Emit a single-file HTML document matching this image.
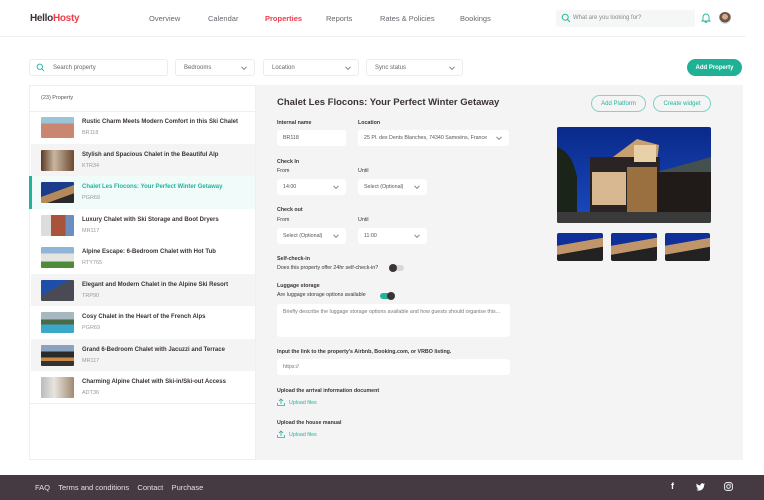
<!DOCTYPE html>
<html><head><meta charset="utf-8"><style>
*{margin:0;padding:0;box-sizing:border-box}
body{width:764px;height:500px;background:#fff;font-family:"Liberation Sans",sans-serif;color:#3a3338;position:relative;overflow:hidden;font-size:7px}
.a{position:absolute}
.nav span{position:absolute;top:14px;font-size:7.5px;color:#6b6670}
.box{position:absolute;background:#fff;border:1px solid #ececec;border-radius:3px;font-size:6px;color:#666;padding-left:8px;display:flex;align-items:center}
.chev{position:absolute;right:8px;top:50%;width:4px;height:4px;border-right:1px solid #888;border-bottom:1px solid #888;transform:translateY(-70%) rotate(45deg)}
.row{position:absolute;left:31px;width:224px;height:32.5px}
.row .th{position:absolute;left:10px;top:6px;width:33px;height:21px;border-radius:1px}
.row b{position:absolute;left:51px;top:8px;font-size:6px;color:#3a3338}
.row i{position:absolute;left:51px;top:19px;font-size:5.5px;color:#999;font-style:normal}
.lbl{position:absolute;font-size:5.3px;font-weight:bold;color:#3a3338}
.sm{position:absolute;font-size:5.3px;color:#3a3338}
.in{position:absolute;background:#fff;border-radius:3px;font-size:5.3px;color:#555;display:flex;align-items:center;padding-left:6px}
.up{position:absolute;font-size:5.3px;color:#23b39b}
</style></head><body>
<div class="a" style="left:30px;top:13px;font-size:10px;font-weight:bold;letter-spacing:-0.3px"><span style="color:#3a3338">Hello</span><span style="color:#ee3d4a">Hosty</span></div>
<div class="nav">
<span style="left:149px">Overview</span><span style="left:208px">Calendar</span><span style="left:265px;color:#ee3d4a;font-weight:bold">Properties</span><span style="left:326px">Reports</span><span style="left:380px">Rates &amp; Policies</span><span style="left:460px">Bookings</span>
</div>
<div class="a" style="left:556px;top:10px;width:139px;height:17px;background:#f5f7f7;border-radius:2px"></div>
<svg class="a" style="left:561px;top:13px" width="10" height="10" viewBox="0 0 10 10"><circle cx="4.2" cy="4.2" r="3" fill="none" stroke="#23b39b" stroke-width="1"/><path d="M6.4 6.4L9 9" stroke="#23b39b" stroke-width="1"/></svg>
<div class="a" style="left:573px;top:15px;font-size:6px;color:#888">What are you looking for?</div>
<svg class="a" style="left:701px;top:12px" width="10" height="11" viewBox="0 0 10 11"><path d="M2 8V5a3 3 0 016 0v3l1 1H1z M4 9.5a1 1 0 002 0" fill="none" stroke="#23b39b" stroke-width="0.9"/></svg>
<div class="a" style="left:719px;top:12px;width:12px;height:12px;border-radius:50%;background:radial-gradient(circle at 50% 40%,#d9a88a 0 30%,#6a5548 32% 60%,#ddd 62%)"></div>
<div class="a" style="left:0;top:36px;width:746px;height:1px;background:#eef0f5"></div>
<div class="box" style="left:29px;top:59px;width:139px;height:17px;padding-left:23px">Search property</div>
<svg class="a" style="left:36px;top:63px" width="9" height="9" viewBox="0 0 10 10"><circle cx="4.2" cy="4.2" r="3" fill="none" stroke="#23b39b" stroke-width="1"/><path d="M6.4 6.4L9 9" stroke="#23b39b" stroke-width="1"/></svg>
<div class="box" style="left:175px;top:59px;width:80px;height:17px">Bedrooms<span class="chev"></span></div>
<div class="box" style="left:263px;top:59px;width:96px;height:17px">Location<span class="chev"></span></div>
<div class="box" style="left:366px;top:59px;width:97px;height:17px">Sync status<span class="chev"></span></div>
<div class="a" style="left:687px;top:59px;width:55px;height:17px;border-radius:9px;background:#1fb195;color:#fff;font-size:6px;font-weight:bold;display:flex;align-items:center;justify-content:center">Add Property</div>
<div class="a" style="left:29px;top:85px;width:227px;height:375px;border:1px solid #efefef;background:#fff"></div>
<div class="a" style="left:41px;top:95px;font-size:5.5px;color:#555">(23) Property</div>
<div class="a" style="left:30px;top:111px;width:225px;height:1px;background:#efefef"></div>
<div class="row" style="top:111px"><div class="th" style="background:linear-gradient(#9ac4d8 0 30%,#c98670 30% 100%)"></div><b>Rustic Charm Meets Modern Comfort in this Ski Chalet</b><i>BR118</i></div>
<div class="row" style="top:143.5px;background:#f4f4f4"><div class="th" style="background:linear-gradient(90deg,#5a3a24,#c9b6a0 40%,#6b4a30)"></div><b>Stylish and Spacious Chalet in the Beautiful Alp</b><i>KTR34</i></div>
<div class="row" style="top:176px;left:29px;width:226px;background:#f1fbfa;border-left:3px solid #23b39b"><div class="th" style="left:9px;background:linear-gradient(160deg,#1a3c8a 0 45%,#b48a5a 46% 70%,#2a2a2a 71%)"></div><b style="left:50px;color:#23b39b">Chalet Les Flocons: Your Perfect Winter Getaway</b><i style="left:50px">PGR69</i></div>
<div class="row" style="top:208.5px"><div class="th" style="background:linear-gradient(90deg,#ddd 0 30%,#a9533a 30% 75%,#6a8fbf 75%)"></div><b>Luxury Chalet with Ski Storage and Boot Dryers</b><i>MR117</i></div>
<div class="row" style="top:241px"><div class="th" style="background:linear-gradient(#8fb6d8 0 30%,#e5e5e0 30% 70%,#4f8a3a 70%)"></div><b>Alpine Escape: 6-Bedroom Chalet with Hot Tub</b><i>RTY765</i></div>
<div class="row" style="top:273.5px;background:#f4f4f4"><div class="th" style="background:linear-gradient(150deg,#1e4ea8 0 40%,#4a4a55 41%)"></div><b>Elegant and Modern Chalet in the Alpine Ski Resort</b><i>TRP90</i></div>
<div class="row" style="top:306px"><div class="th" style="background:linear-gradient(#a8b8c0 0 35%,#4a6a4a 35% 60%,#3aa8c8 60%)"></div><b>Cosy Chalet in the Heart of the French Alps</b><i>PGR69</i></div>
<div class="row" style="top:338.5px;background:#f4f4f4"><div class="th" style="background:linear-gradient(#8aa4c0 0 30%,#2a2a28 30% 60%,#c88a4a 60% 75%,#333 75%)"></div><b>Grand 6-Bedroom Chalet with Jacuzzi and Terrace</b><i>MR117</i></div>
<div class="row" style="top:371px"><div class="th" style="background:linear-gradient(90deg,#bbb,#e8e4de 40%,#a08a70)"></div><b>Charming Alpine Chalet with Ski-in/Ski-out Access</b><i>ADT36</i></div>
<div class="a" style="left:30px;top:403px;width:225px;height:1px;background:#efefef"></div>
<div class="a" style="left:256px;top:85px;width:487px;height:375px;background:#f4f4f4"></div>
<div class="a" style="left:277px;top:97px;font-size:9.5px;font-weight:bold;color:#3a3338">Chalet Les Flocons: Your Perfect Winter Getaway</div>
<div class="a" style="left:591px;top:95px;width:55px;height:17px;border:1px solid #7fd6c6;border-radius:9px;color:#23b39b;font-size:6px;display:flex;align-items:center;justify-content:center">Add Platform</div>
<div class="a" style="left:653px;top:95px;width:58px;height:17px;border:1px solid #7fd6c6;border-radius:9px;color:#23b39b;font-size:6px;display:flex;align-items:center;justify-content:center">Create widget</div>
<div class="lbl" style="left:277px;top:120px">Internal name</div>
<div class="lbl" style="left:358px;top:120px">Location</div>
<div class="in" style="left:277px;top:130px;width:69px;height:16px">BR118</div>
<div class="in" style="left:358px;top:130px;width:151px;height:16px">25 Pl. des Dents Blanches, 74340 Samoëns, France<span class="chev"></span></div>
<div class="lbl" style="left:277px;top:159px">Check In</div>
<div class="sm" style="left:277px;top:168px">From</div><div class="sm" style="left:358px;top:168px">Until</div>
<div class="in" style="left:277px;top:179px;width:69px;height:16px">14:00<span class="chev"></span></div>
<div class="in" style="left:358px;top:179px;width:69px;height:16px">Select (Optional)<span class="chev"></span></div>
<div class="lbl" style="left:277px;top:207px">Check out</div>
<div class="sm" style="left:277px;top:217px">From</div><div class="sm" style="left:358px;top:217px">Until</div>
<div class="in" style="left:277px;top:228px;width:69px;height:16px">Select (Optional)<span class="chev"></span></div>
<div class="in" style="left:358px;top:228px;width:69px;height:16px">11:00<span class="chev"></span></div>
<div class="lbl" style="left:277px;top:256px">Self-check-in</div>
<div class="sm" style="left:277px;top:265px">Does this property offer 24hr self-check-in?</div>
<div class="a" style="left:390px;top:265px;width:14px;height:6px;border-radius:3px;background:#d8d8d8"></div>
<div class="a" style="left:389px;top:264px;width:8px;height:8px;border-radius:50%;background:#3a3338"></div>
<div class="lbl" style="left:277px;top:283px">Luggage storage</div>
<div class="sm" style="left:277px;top:292px">Are luggage storage options available</div>
<div class="a" style="left:380px;top:293px;width:14px;height:6px;border-radius:3px;background:#23b39b"></div>
<div class="a" style="left:387px;top:292px;width:8px;height:8px;border-radius:50%;background:#3a3338"></div>
<div class="in" style="left:277px;top:304px;width:233px;height:33px;align-items:flex-start;padding-top:5px;color:#777">Briefly describe the luggage storage options available and how guests should organise this...</div>
<div class="lbl" style="left:277px;top:349px">Input the link to the property's Airbnb, Booking.com, or VRBO listing.</div>
<div class="in" style="left:277px;top:359px;width:233px;height:16px;color:#777">https://</div>
<div class="lbl" style="left:277px;top:388px">Upload the arrival information document</div>
<svg class="a" style="left:277px;top:398px" width="8" height="8" viewBox="0 0 8 8"><path d="M4 6V1M2 3l2-2 2 2M0.5 5v2.5h7V5" fill="none" stroke="#23b39b" stroke-width="0.8"/></svg>
<div class="up" style="left:289px;top:400px">Upload files</div>
<div class="lbl" style="left:277px;top:420px">Upload the house manual</div>
<svg class="a" style="left:277px;top:430px" width="8" height="8" viewBox="0 0 8 8"><path d="M4 6V1M2 3l2-2 2 2M0.5 5v2.5h7V5" fill="none" stroke="#23b39b" stroke-width="0.8"/></svg>
<div class="up" style="left:289px;top:432px">Upload files</div>
<svg class="a" style="left:557px;top:127px;border-radius:2px" width="154" height="96" viewBox="0 0 154 96" preserveAspectRatio="none">
<defs><linearGradient id="s" x1="0" y1="0" x2="0" y2="1"><stop offset="0" stop-color="#0a2a8a"/><stop offset="1" stop-color="#1a4ac0"/></linearGradient></defs>
<rect width="154" height="96" fill="url(#s)"/>
<path d="M0 20 Q15 25 20 50 L20 96 L0 96Z" fill="#1a2418"/>
<path d="M56 30 L80 12 L102 18 L100 35 L56 35Z" fill="#c8a070"/>
<rect x="33" y="30" width="70" height="66" fill="#2a2424"/>
<rect x="35" y="45" width="34" height="33" fill="#d8b890"/>
<rect x="70" y="40" width="30" height="46" fill="#9a7040"/>
<rect x="77" y="18" width="22" height="17" fill="#e8d0a8"/>
<rect x="100" y="45" width="54" height="42" fill="#201a18"/>
<path d="M100 45 L154 30 L154 45Z" fill="#445050"/>
<rect x="0" y="85" width="154" height="11" fill="#3a3a3a"/>
</svg>
<div class="a" style="left:557px;top:233px;width:46px;height:28px;border-radius:2px;background:linear-gradient(170deg,#0e3098 0 35%,#c0956a 36% 60%,#222 61%)"></div>
<div class="a" style="left:611px;top:233px;width:46px;height:28px;border-radius:2px;background:linear-gradient(170deg,#0e3098 0 35%,#c0956a 36% 60%,#222 61%)"></div>
<div class="a" style="left:665px;top:233px;width:45px;height:28px;border-radius:2px;background:linear-gradient(170deg,#0e3098 0 35%,#c0956a 36% 60%,#222 61%)"></div>
<div class="a" style="left:0;top:475px;width:764px;height:25px;background:#453a42"></div>
<div class="a" style="left:35px;top:483px;font-size:7.5px;color:#e4e0e4">FAQ&nbsp;&nbsp;&nbsp; Terms and conditions&nbsp;&nbsp;&nbsp; Contact&nbsp;&nbsp;&nbsp; Purchase</div>
<div class="a" style="left:671px;top:481px;font-size:9px;color:#fff;font-weight:bold">f</div>
<svg class="a" style="left:696px;top:483px" width="9" height="8" viewBox="0 0 24 20"><path d="M24 2.4a10 10 0 01-2.8.8A5 5 0 0023.3.4a10 10 0 01-3.1 1.2A4.9 4.9 0 0011.8 6 14 14 0 011.7.9a4.9 4.9 0 001.5 6.6A4.9 4.9 0 011 6.9a4.9 4.9 0 003.9 4.9 5 5 0 01-2.2.1 4.9 4.9 0 004.6 3.4A9.9 9.9 0 010 17.3 14 14 0 007.5 19.5c9 0 14-7.5 14-14v-.6A10 10 0 0024 2.4z" fill="#fff"/></svg>
<svg class="a" style="left:724px;top:482px" width="9" height="9" viewBox="0 0 10 10"><rect x="0.7" y="0.7" width="8.6" height="8.6" rx="2.4" fill="none" stroke="#fff" stroke-width="1"/><circle cx="5" cy="5" r="2" fill="none" stroke="#fff" stroke-width="1"/><circle cx="7.5" cy="2.5" r="0.5" fill="#fff"/></svg>
</body></html>
